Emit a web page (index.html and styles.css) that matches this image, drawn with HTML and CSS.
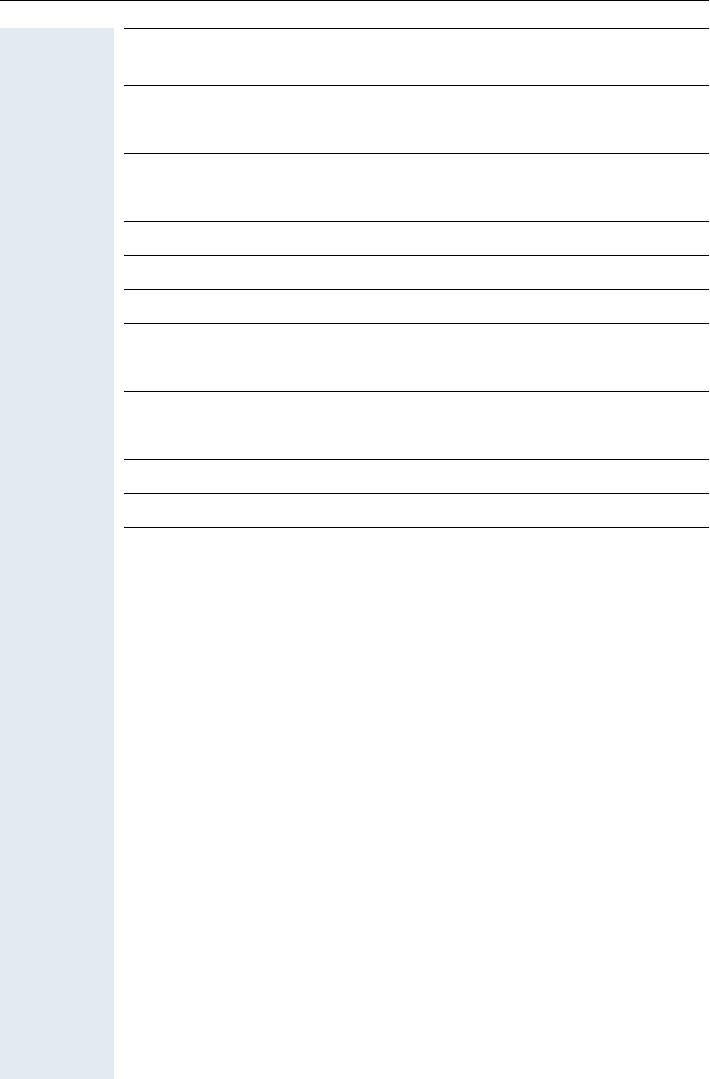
FILE: index.html
```html
<!DOCTYPE html>
<html lang="en">
<head>
    <meta charset="UTF-8">
    <meta name="viewport" content="width=device-width, initial-scale=1.0">
    <title>Page</title>
    <link rel="stylesheet" href="styles.css">
</head>
<body>
    <header class="top-rule"></header>

    <div class="layout">
        <!-- Левое поле страницы -->
        <aside class="margin-col"></aside>

        <!-- Таблица -->
        <div class="spec">
            <div class="row row-head"></div>
            <div class="row row-double"></div>
            <div class="row row-double"></div>
            <div class="row"></div>
            <div class="row"></div>
            <div class="row"></div>
            <div class="row row-double"></div>
            <div class="row row-double"></div>
            <div class="row"></div>
            <div class="row"></div>
        </div>
    </div>
</body>
</html>
```

FILE: styles.css
```css
/* Общие стили */
body {
    margin: 0;
    font-family: "Liberation Sans", Arial, sans-serif;
    background: #fff;
    color: #000;
}

.top-rule {
    height: 27px;
    margin-right: 1px;
    border-top: 1px solid #000;
}

.layout {
    display: grid;
    grid-template-columns: 114px 1fr;
    column-gap: 10px;
    padding-right: 1px;
    min-height: calc(100vh - 28px);
}

.margin-col {
    background-color: #e3eaf2;
}

.spec {
    align-self: start;
    border-bottom: 1px solid #000;
}

.row {
    height: 33px;
    border-top: 1px solid #000;
}

.row-double {
    height: 67px;
}

.row-head {
    height: 56px;
}
```
